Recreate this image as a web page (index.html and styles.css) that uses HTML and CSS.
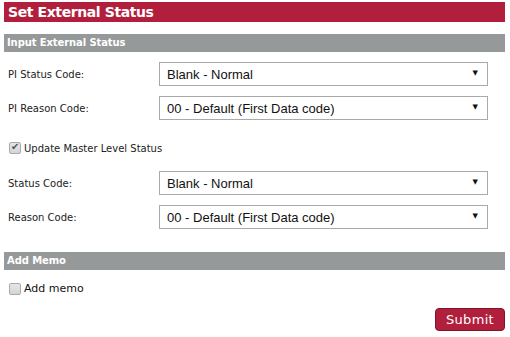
FILE: index.html
```html
<!DOCTYPE html>
<html lang="en">
<head>
<meta charset="UTF-8">
<title>Set External Status</title>
<link rel="stylesheet" href="styles.css">
</head>
<body>
<div class="panel">
  <h1 class="title">Set External Status</h1>

  <h2 class="section">Input External Status</h2>
  <div class="form-grid">
    <label class="label">PI Status Code:</label>
    <div class="select-wrap">
      <select class="select"><option>Blank - Normal</option></select>
    </div>
    <label class="label">PI Reason Code:</label>
    <div class="select-wrap">
      <select class="select"><option>00 - Default (First Data code)</option></select>
    </div>
  </div>

  <label class="check-row check-master">
    <input type="checkbox" class="check" checked disabled>
    Update Master Level Status
  </label>

  <div class="form-grid">
    <label class="label">Status Code:</label>
    <div class="select-wrap">
      <select class="select"><option>Blank - Normal</option></select>
    </div>
    <label class="label">Reason Code:</label>
    <div class="select-wrap">
      <select class="select"><option>00 - Default (First Data code)</option></select>
    </div>
  </div>

  <h2 class="section section-memo">Add Memo</h2>
  <label class="check-row check-memo">
    <input type="checkbox" class="check">
    Add memo
  </label>

  <div class="actions">
    <button class="submit">Submit</button>
  </div>
</div>
</body>
</html>
```

FILE: styles.css
```css
:root {
  --red: #b21f3d;
  --gray: #969999;
  --text: #222;
}

body {
  margin: 0;
  background: #fff;
  font-family: "DejaVu Sans", Verdana, sans-serif;
  color: var(--text);
}

.panel {
  padding: 2px 5px 0 4px;
}

.title {
  margin: 0;
  height: 20px;
  padding-left: 4px;
  background: var(--red);
  color: #fff;
  font-size: 14px;
  font-weight: bold;
  line-height: 20px;
  letter-spacing: -0.4px;
}

.section {
  margin: 12px 0 0;
  height: 18px;
  padding-left: 3px;
  background: var(--gray);
  color: #fff;
  font-size: 10px;
  font-weight: bold;
  line-height: 18px;
  letter-spacing: -0.1px;
}

.section-memo {
  margin-top: 23px;
}

.form-grid {
  display: grid;
  grid-template-columns: 151px 329px;
  row-gap: 10px;
  padding: 10px 0 0 4px;
  align-items: center;
}

.label {
  font-size: 10px;
}

.select-wrap {
  position: relative;
}

.select-wrap::after {
  content: "▼";
  position: absolute;
  right: 10px;
  top: 7px;
  font-size: 7px;
  color: #111;
  pointer-events: none;
}

.select {
  appearance: none;
  -webkit-appearance: none;
  width: 100%;
  height: 24px;
  margin: 0;
  padding: 0 7px;
  border: 1px solid #aaa;
  border-radius: 0;
  background: #fff;
  font-family: "Liberation Sans", Arial, sans-serif;
  font-size: 13px;
  color: #111;
}

.check-row {
  display: flex;
  align-items: center;
  gap: 3px;
  padding-left: 5px;
  font-size: 10px;
}

.check-master {
  margin: 22px 0 7px;
}

.check-memo {
  margin-top: 12px;
  font-size: 11px;
  color: #111;
}

.check {
  appearance: none;
  -webkit-appearance: none;
  position: relative;
  width: 12px;
  height: 12px;
  margin: 0;
  border: 1px solid #a9a9a9;
  border-radius: 2px;
  background: linear-gradient(#e6e6e6, #d4d4d4);
}

.check:checked::after {
  content: "✔";
  position: absolute;
  left: 1px;
  top: -2px;
  font-size: 10px;
  color: #555;
}

.actions {
  display: flex;
  justify-content: flex-end;
  margin-top: 13px;
}

.submit {
  width: 70px;
  height: 23px;
  padding: 0;
  border: 1px solid #7d1429;
  border-radius: 4px;
  background: var(--red);
  color: #fff;
  font-family: "DejaVu Sans", Verdana, sans-serif;
  font-size: 13px;
  letter-spacing: 0.3px;
}
```
